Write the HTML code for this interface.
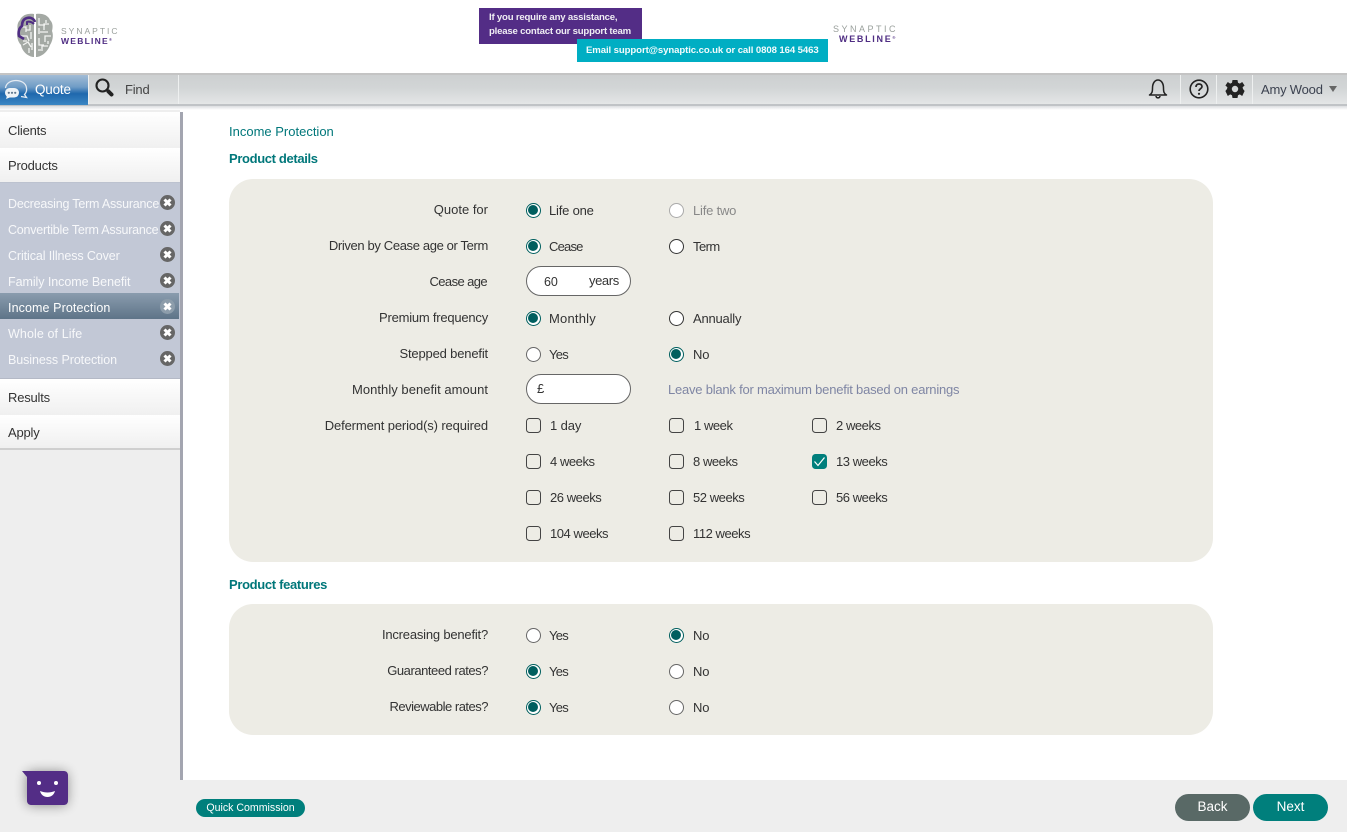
<!DOCTYPE html>
<html lang="en"><head><meta charset="utf-8"><title>Income Protection</title>
<style>
*{box-sizing:border-box}
html,body{margin:0;padding:0;width:1347px;height:832px;overflow:hidden;background:#fff;font-family:"Liberation Sans",sans-serif;font-size:13px;color:#333}
.a{position:absolute;white-space:nowrap}
.lbl{position:absolute;white-space:nowrap;right:859px;color:#333;line-height:16px;letter-spacing:-.1px}
.t{position:absolute;white-space:nowrap;line-height:16px;color:#333;letter-spacing:-.1px}
.w{letter-spacing:-.45px}
.y{letter-spacing:-.75px}
.r{position:absolute;width:15px;height:15px;border-radius:50%;border:1.2px solid #666;background:#fff}
.r.on{border-color:#005f5f;background:#fff}
.r.on:after{content:"";position:absolute;left:1.3px;top:1.3px;width:10px;height:10px;border-radius:50%;background:#005f5f}
.r.off{border-color:#aaa}
.c{position:absolute;width:15px;height:15px;border-radius:3.5px;border:1.2px solid #444;background:transparent}
.side{position:absolute;left:0;width:180px;background:linear-gradient(#fff,#f0f0f0);padding-left:8px;color:#333;letter-spacing:-.2px}
.p{position:absolute;left:0;width:180px;height:26px;line-height:26px;padding-left:8px;color:#f7f8fa;font-size:12.5px;white-space:nowrap;overflow:visible}
.x{position:absolute;left:160px;width:15px;height:15px}
.div{position:absolute;top:75px;width:1px;height:29px;background:#eef0f0}
</style></head><body>

<!-- logo -->
<svg class="a" style="left:16px;top:12px" width="38" height="47" viewBox="0 0 38 47" fill="none">
<path d="M18 2C12 1 6 3 4 8 1 11 1 15 2 19 0 24 2 30 5 33 6 39 11 44 17 45L18 45V2Z" fill="#a4a9a4"/>
<path d="M20 2C26 1 32 3 34 8 37 11 37 15 36 19 38 24 36 30 34 33 32 39 27 44 21 45L20 45V2Z" fill="#a4a9a4"/>
<g stroke="#f2f3f1" stroke-width="1.3"><path d="M5 15h5v5M14 13v5h-4M4 24h7l2 5M15 20v7M7 33l5-3 3 5M13 41v-5M7 29h4M16 31v7M23 6v7h6M33 12h-5v6M24 20h8M35 24h-6v6M23 26v7h5M26 39v-5h6M30 8v3M23 16v6M32 29v3M22 38h3"/></g>
<path d="M19 10C18 7 15 5 11 6 7 7 6 10 6 14 3 16 2 20 3 24L8 27" stroke="#4f2d83" stroke-width="2.6" stroke-linejoin="round"/>
<path d="M11 13V10C13 9 16 10 18 12" stroke="#4f2d83" stroke-width="2"/>
</svg>
<div class="a" style="left:61px;top:27px;font-size:8.5px;letter-spacing:2px;color:#9aa09c;line-height:9px">SYNAPTIC</div>
<div class="a" style="left:61px;top:35px;font-size:8.5px;letter-spacing:1.25px;color:#4f2d83;font-weight:bold;line-height:9px">WEBLINE<span style="font-size:4px;vertical-align:3px;letter-spacing:0">®</span></div>

<!-- banner -->
<div class="a" style="left:479px;top:8px;width:163px;height:36px;background:#532d86"></div>
<div class="a" style="left:489px;top:11px;color:#f0eef4;font-size:9.6px;line-height:14px;font-weight:bold;letter-spacing:-.2px;filter:blur(.25px)">If you require any assistance,<br>please contact our support team</div>
<div class="a" style="left:577px;top:39px;width:251px;height:23px;background:#00aec3"></div>
<div class="a" style="left:586px;top:44px;color:#f2fbfc;font-size:9.6px;line-height:13px;font-weight:bold;letter-spacing:-.1px;filter:blur(.25px)">Email support@synaptic.co.uk or call 0808 164 5463</div>
<div class="a" style="left:833px;top:25px;font-size:9px;letter-spacing:2.5px;color:#9aa09c;line-height:9px">SYNAPTIC</div>
<div class="a" style="left:839px;top:33px;font-size:9px;letter-spacing:1.7px;color:#4f2d83;font-weight:bold;line-height:9px">WEBLINE<span style="font-size:4px;vertical-align:3px;letter-spacing:0">®</span></div>

<!-- toolbar -->
<div class="a" style="left:0;top:73px;width:1347px;height:33px;background:linear-gradient(#cdd0d1,#d2d5d6 45%,#e4e6e6);border-top:2px solid #c4c4c4;border-bottom:2px solid #c0c3c6"></div>
<div class="a" style="left:0;top:106px;width:1347px;height:4px;background:linear-gradient(#dcdee0,#fff)"></div>
<div class="a" style="left:0;top:75px;width:88px;height:30px;background:linear-gradient(#a3bcd6,#6f9cc6 40%,#1f68ad 62%,#3b87c4)"></div>
<svg class="a" style="left:3px;top:78px" width="26" height="24" viewBox="0 0 26 24" fill="none">
<path d="M2.500 10C3 5 8 2.500 13 2.500 18 2.500 23 5 23.500 10 24 13 23 15 21.500 16.500L23.500 19.500 18 18.500" stroke="#e4ebf2" stroke-width="1.3"/>
<rect x="2" y="10" width="14" height="9.500" rx="4.700" fill="#eef3f7"/>
<path d="M4 18L3 21 8 19Z" fill="#eef3f7"/>
<circle cx="5.800" cy="14.800" r="1.100" fill="#60788f"/><circle cx="9" cy="14.800" r="1.100" fill="#60788f"/><circle cx="12.200" cy="14.800" r="1.100" fill="#60788f"/>
</svg>
<div class="a" style="left:35px;top:81px;color:#fff;font-size:13.500px;line-height:18px;letter-spacing:-.2px">Quote</div>
<svg class="a" style="left:94px;top:77px" width="22" height="22" viewBox="0 0 22 22" fill="none">
<circle cx="8.500" cy="8.500" r="6" stroke="#222" stroke-width="2.100"/><path d="M14.500 14.500L17.500 17.500" stroke="#222" stroke-width="4" stroke-linecap="round"/>
</svg>
<div class="a" style="left:125px;top:81px;color:#444;font-size:13px;line-height:18px;letter-spacing:-.2px">Find</div>
<div class="div" style="left:88px"></div><div class="div" style="left:178px"></div>
<div class="div" style="left:1180px"></div><div class="div" style="left:1216px"></div><div class="div" style="left:1252px"></div>
<svg class="a" style="left:1147px;top:78px" width="22" height="22" viewBox="0 0 22 22" fill="none" stroke="#222" stroke-width="1.500">
<path d="M2.500 17C5 15.500 5.500 14 5.500 10 5.500 5 8 2 11 2 14 2 16.500 5 16.500 10 16.500 14 17 15.500 19.500 17Z" stroke-linejoin="round"/><path d="M9 18C9 20.500 13 20.500 13 18"/>
</svg>
<svg class="a" style="left:1188px;top:78px" width="22" height="22" viewBox="0 0 22 22" fill="none">
<circle cx="11" cy="11" r="8.800" stroke="#222" stroke-width="1.600"/><path d="M8 9C8 6.800 9.500 6 11 6 12.700 6 14 7 14 8.600 14 10.600 11 10.800 11 13" stroke="#222" stroke-width="1.700"/><circle cx="11" cy="15.800" r="1.100" fill="#222"/>
</svg>
<svg class="a" style="left:1224px;top:78px" width="22" height="22" viewBox="0 0 22 22">
<path fill="#222" fill-rule="evenodd" d="M8.500 2H13.500L14 4.800 15.800 5.600 18.200 4 20.600 7.500 18.600 9.200 19 11 20.600 13 18.200 18 15.800 16.400 14 17.200 13.500 20H8.500L8 17.200 6.200 16.400 3.800 18 1.400 13 3 11 3.400 9.200 1.400 7.500 3.800 4 6.200 5.600 8 4.800ZM11 7.800A3.200 3.200 0 1 0 11 14.200 3.200 3.200 0 1 0 11 7.800Z"/>
</svg>
<div class="a" style="left:1261px;top:81px;color:#3c4250;font-size:13px;line-height:17px;letter-spacing:-.2px">Amy Wood</div>
<div class="a" style="left:1329px;top:86px;width:0;height:0;border-left:4px solid transparent;border-right:4px solid transparent;border-top:6.500px solid #666"></div>

<!-- sidebar -->
<div class="a" style="left:0;top:110px;width:180px;height:670px;background:#eeeeee"></div>
<div class="a" style="left:180px;top:112px;width:3px;height:668px;background:#a3a5b0"></div>
<div class="side" style="top:112px;height:36px;line-height:37px">Clients</div>
<div class="side" style="top:148px;height:35px;line-height:35px;border-bottom:1px solid #c4c6d0">Products</div>
<div class="a" style="left:0;top:182px;width:180px;height:196px;background:#c2c8d6;border-top:1px solid #bcc2cf"></div>
<div class="p" style="top:191px;letter-spacing:-.2px">Decreasing Term Assurance</div>
<div class="p" style="top:217px;letter-spacing:-.22px">Convertible Term Assurance</div>
<div class="p" style="top:243px;letter-spacing:-.1px">Critical Illness Cover</div>
<div class="p" style="top:269px;letter-spacing:-.06px">Family Income Benefit</div>
<div class="a" style="left:0;top:293px;width:179px;height:26px;background:linear-gradient(#8a9cae,#5e7488)"></div>
<div class="p" style="top:295px;letter-spacing:.1px;color:#fff">Income Protection</div>
<div class="p" style="top:321px;letter-spacing:.1px">Whole of Life</div>
<div class="p" style="top:347px;letter-spacing:-.08px">Business Protection</div>
<svg width="0" height="0" style="position:absolute"><defs><g id="xi"><circle cx="7.500" cy="7.500" r="7.500" fill="#666"/><path d="M4.500 4.500L10.500 10.500M10.500 4.500L4.500 10.500" stroke="#fff" stroke-width="3"/></g><g id="xs"><circle cx="7.500" cy="7.500" r="7.500" fill="#8d9dab"/><path d="M4.500 4.500L10.500 10.500M10.500 4.500L4.500 10.500" stroke="#fff" stroke-width="3"/></g></defs></svg>
<svg class="x" style="top:195px"><use href="#xi"/></svg>
<svg class="x" style="top:221px"><use href="#xi"/></svg>
<svg class="x" style="top:247px"><use href="#xi"/></svg>
<svg class="x" style="top:273px"><use href="#xi"/></svg>
<svg class="x" style="top:299px"><use href="#xs"/></svg>
<svg class="x" style="top:325px"><use href="#xi"/></svg>
<svg class="x" style="top:351px"><use href="#xi"/></svg>
<div class="side" style="top:378px;height:37px;line-height:38px;border-top:1px solid #b4b9c6">Results</div>
<div class="side" style="top:415px;height:35px;line-height:35px;border-bottom:2px solid #cfcfcf">Apply</div>

<!-- content -->
<div class="a" style="left:229px;top:124px;color:#00777a;line-height:16px;letter-spacing:0">Income Protection</div>
<div class="a" style="left:229px;top:151px;color:#00777a;font-weight:bold;line-height:16px;letter-spacing:-.35px">Product details</div>
<div class="a" style="left:229px;top:179px;width:984px;height:383px;background:#edece5;border-radius:24px"></div>
<div class="a" style="left:229px;top:577px;color:#00777a;font-weight:bold;line-height:16px;letter-spacing:-.33px">Product features</div>
<div class="a" style="left:229px;top:604px;width:984px;height:131px;background:#edece5;border-radius:24px"></div>

<div class="lbl" style="top:202px;letter-spacing:0">Quote for</div>
<div class="lbl" style="top:238px;letter-spacing:-.36px">Driven by Cease age or Term</div>
<div class="lbl" style="top:274px;right:860px;letter-spacing:-.6px">Cease age</div>
<div class="lbl" style="top:310px;letter-spacing:-.22px">Premium frequency</div>
<div class="lbl" style="top:346px;letter-spacing:-.17px">Stepped benefit</div>
<div class="lbl" style="top:382px;letter-spacing:.04px">Monthly benefit amount</div>
<div class="lbl" style="top:418px;letter-spacing:-.13px">Deferment period(s) required</div>
<div class="lbl" style="top:627px;letter-spacing:-.2px">Increasing benefit?</div>
<div class="lbl" style="top:663px;letter-spacing:-.45px">Guaranteed rates?</div>
<div class="lbl" style="top:699px;letter-spacing:-.5px">Reviewable rates?</div>

<div class="r on" style="left:526px;top:203px"></div><div class="t" style="left:549px;top:203px;letter-spacing:-.2px">Life one</div>
<div class="r off" style="left:669px;top:203px"></div><div class="t" style="left:693px;top:203px;color:#888;letter-spacing:-.2px">Life two</div>
<div class="r on" style="left:526px;top:239px"></div><div class="t" style="left:549px;top:239px;letter-spacing:-.8px">Cease</div>
<div class="r" style="left:669px;top:239px;border-color:#333"></div><div class="t" style="left:693px;top:239px;letter-spacing:-.55px">Term</div>

<div class="a" style="left:526px;top:266px;width:105px;height:30px;border:1px solid #666;border-radius:15px;background:#fff"></div>
<div class="t" style="left:544px;top:274px;font-size:12.500px">60</div><div class="t" style="left:589px;top:273px;letter-spacing:-.4px">years</div>

<div class="r on" style="left:526px;top:311px"></div><div class="t" style="left:549px;top:311px;letter-spacing:.2px">Monthly</div>
<div class="r" style="left:669px;top:311px;border-color:#333"></div><div class="t" style="left:693px;top:311px;letter-spacing:-.2px">Annually</div>
<div class="r" style="left:526px;top:347px"></div><div class="t y" style="left:549px;top:347px">Yes</div>
<div class="r on" style="left:669px;top:347px"></div><div class="t" style="left:693px;top:347px">No</div>

<div class="a" style="left:526px;top:374px;width:105px;height:30px;border:1px solid #666;border-radius:15px;background:#fff"></div>
<div class="t" style="left:537px;top:381px">£</div>
<div class="t" style="left:668px;top:382px;color:#7f86a4;letter-spacing:-.22px">Leave blank for maximum benefit based on earnings</div>

<div class="c" style="left:526px;top:418px"></div><div class="t" style="left:550px;top:418px">1 day</div>
<div class="c" style="left:669px;top:418px"></div><div class="t w" style="left:694px;top:418px">1 week</div>
<div class="c" style="left:812px;top:418px"></div><div class="t w" style="left:836px;top:418px">2 weeks</div>
<div class="c" style="left:526px;top:454px"></div><div class="t w" style="left:550px;top:454px">4 weeks</div>
<div class="c" style="left:669px;top:454px"></div><div class="t w" style="left:693px;top:454px">8 weeks</div>
<div class="c" style="left:812px;top:454px;background:#007f7c;border-color:#007f7c"></div>
<svg class="a" style="left:812px;top:454px" width="15" height="15" viewBox="0 0 15 15" fill="none"><path d="M2.500 7.500L6 11.500 12.500 3.500" stroke="#fff" stroke-width="1.200"/></svg>
<div class="t w" style="left:836px;top:454px">13 weeks</div>
<div class="c" style="left:526px;top:490px"></div><div class="t w" style="left:550px;top:490px">26 weeks</div>
<div class="c" style="left:669px;top:490px"></div><div class="t w" style="left:693px;top:490px">52 weeks</div>
<div class="c" style="left:812px;top:490px"></div><div class="t w" style="left:836px;top:490px">56 weeks</div>
<div class="c" style="left:526px;top:526px"></div><div class="t w" style="left:550px;top:526px">104 weeks</div>
<div class="c" style="left:669px;top:526px"></div><div class="t w" style="left:693px;top:526px">112 weeks</div>

<div class="r" style="left:526px;top:628px"></div><div class="t y" style="left:549px;top:628px">Yes</div>
<div class="r on" style="left:669px;top:628px"></div><div class="t" style="left:693px;top:628px">No</div>
<div class="r on" style="left:526px;top:664px"></div><div class="t y" style="left:549px;top:664px">Yes</div>
<div class="r" style="left:669px;top:664px"></div><div class="t" style="left:693px;top:664px">No</div>
<div class="r on" style="left:526px;top:700px"></div><div class="t y" style="left:549px;top:700px">Yes</div>
<div class="r" style="left:669px;top:700px"></div><div class="t" style="left:693px;top:700px">No</div>

<!-- footer -->
<div class="a" style="left:0;top:780px;width:1347px;height:52px;background:#eeeeee"></div>
<div class="a" style="left:0;top:450px;width:180px;height:382px;background:#eeeeee"></div>
<div class="a" style="left:180px;top:450px;width:3px;height:330px;background:#a3a5b0"></div>
<div class="a" style="left:196px;top:799px;width:109px;height:18px;background:#007f7c;border-radius:9px;color:#fff;font-size:10.600px;line-height:19px;text-align:center">Quick Commission</div>
<div class="a" style="left:1175px;top:794px;width:75px;height:27px;background:#596966;border-radius:14px;color:#fff;font-size:13.500px;line-height:25px;text-align:center">Back</div>
<div class="a" style="left:1253px;top:794px;width:75px;height:27px;background:#007f7c;border-radius:14px;color:#fff;font-size:13.500px;line-height:25px;text-align:center">Next</div>

<!-- chat widget -->
<svg class="a" style="left:8px;top:756px" width="76" height="66" viewBox="0 0 76 66" fill="none">
<defs><filter id="sh" x="-40%" y="-40%" width="180%" height="180%"><feGaussianBlur stdDeviation="6"/></filter></defs>
<rect x="19" y="16" width="40" height="33" rx="4" fill="#000" opacity=".45" filter="url(#sh)"/>
<path d="M14 15H56C58.200 15 60 16.800 60 19V45C60 47.200 58.200 49 56 49H23C21 49 19 47.200 19 45V21Z" fill="#532d86"/>
<circle cx="31" cy="27" r="2" fill="#fff"/><circle cx="48" cy="27" r="2" fill="#fff"/>
<path d="M32 35C37 37 42 37 47 35 46 39 43 41 39.500 41 36 41 33 39 32 35Z" fill="#fff"/>
</svg>
</body></html>
